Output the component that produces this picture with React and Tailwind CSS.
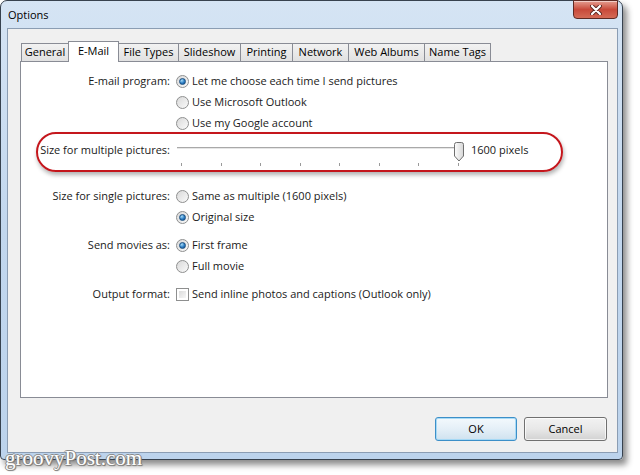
import React from 'react';

const tabs = [
  { name: 'General', w: 'w-[48px]' },
  { name: 'E-Mail', w: 'w-[51px]', active: true },
  { name: 'File Types', w: 'w-[61px]' },
  { name: 'Slideshow', w: 'w-[63px]' },
  { name: 'Printing', w: 'w-[53px]' },
  { name: 'Network', w: 'w-[57px]' },
  { name: 'Web Albums', w: 'w-[77px]' },
  { name: 'Name Tags', w: 'w-[67px]' },
];

const Radio = ({ checked }) => (
  <span className="w-[13px] h-[13px] shrink-0 rounded-full border border-[#8e8f8f] bg-gradient-to-br from-[#d9d9d9] to-[#fafafa] flex items-center justify-center">
    {checked && (
      <span className="w-[7px] h-[7px] rounded-full border border-[#1b4f80] bg-[radial-gradient(circle_at_35%_30%,#a6dcf8,#2b7cc3_55%,#0f4a86)]"></span>
    )}
  </span>
);

const Check = () => (
  <span className="w-[13px] h-[13px] shrink-0 border border-[#8e8f8f] bg-white p-[2px]">
    <span className="block w-full h-full bg-gradient-to-br from-[#dcdcdc] to-[#f7f7f7]"></span>
  </span>
);

const Row = ({ label, children }) => (
  <div className="flex items-center h-[21px]">
    <div className="w-[149px] text-right shrink-0">{label}</div>
    <div className="ml-[6px] flex items-center gap-[3px]">{children}</div>
  </div>
);

const Option = ({ checked, children }) => (
  <div className="flex items-center h-[21px] pl-[155px] gap-[3px]">
    <Radio checked={checked} />
    <span>{children}</span>
  </div>
);

const ticks = [0, 1, 2, 3, 4, 5, 6, 7];

export default function App() {
  return (
    <div className="w-[640px] h-[475px] bg-white relative overflow-hidden font-['Open_Sans','Noto_Sans',sans-serif] text-[11px] text-[#1a1a1a]">
      {/* window */}
      <div className="w-[623px] h-[460px] rounded-t-[7px] rounded-b-[4px] border border-[#37424f] bg-gradient-to-b from-[#d5e4f4] via-[#c2d7ee] to-[#bcd3ec] shadow-[4px_5px_6px_rgba(0,0,0,0.45)] flex flex-col">
        {/* title bar */}
        <div className="h-[27px] flex items-start justify-between shrink-0">
          <span className="ml-[7px] mt-[6px] text-[11px] text-black">Options</span>
          <div className="-mt-px mr-[4px] w-[45px] h-[19px] rounded-b-[4px] border border-[#5e2a24] bg-gradient-to-b from-[#e49c90] via-[#c8493a] to-[#d46a56] flex items-center justify-center shadow-[inset_0_1px_0_rgba(255,255,255,0.5)]">
            <svg width="12" height="10" viewBox="0 0 12 10">
              <path d="M2 1 L10 9 M10 1 L2 9" stroke="#5a2620" strokeWidth="4" strokeLinecap="round" />
              <path d="M2 1 L10 9 M10 1 L2 9" stroke="#ffffff" strokeWidth="2.2" strokeLinecap="round" />
            </svg>
          </div>
        </div>

        {/* client area */}
        <div className="ml-[6px] mr-[4px] mb-[6px] flex-1 border border-[#8b9db3] bg-[#f0f0f0] pl-[12px] pt-[12px] flex flex-col">
          {/* tabs */}
          <div className="flex items-end h-[20px] pl-[2px] relative z-10">
            {tabs.map((t) =>
              t.active ? (
                <div
                  key={t.name}
                  className={`${t.w} h-[21px] -mb-px -ml-px bg-white border border-b-0 border-[#898c95] flex items-start justify-center pt-[1px] text-black`}
                >
                  {t.name}
                </div>
              ) : (
                <div
                  key={t.name}
                  className={`${t.w} h-[18px] -ml-px bg-gradient-to-b from-[#f2f2f2] to-[#e1e1e1] border border-b-0 border-[#898c95] flex items-center justify-center text-black`}
                >
                  {t.name}
                </div>
              )
            )}
          </div>

          {/* panel */}
          <div className="w-[588px] h-[337px] border border-[#898c95] bg-white pt-[9px]">
            <Row label="E-mail program:">
              <Radio checked />
              <span>Let me choose each time I send pictures</span>
            </Row>
            <Option>Use Microsoft Outlook</Option>
            <Option>Use my Google account</Option>

            {/* highlighted slider row */}
            <div className="-mt-[2px] ml-[15px] w-[527px] h-[40px] rounded-[20px] border-2 border-[#c4161c] shadow-[1px_3px_4px_rgba(0,0,0,0.3)] flex items-start">
              <div className="w-[132px] shrink-0 text-right mt-[8px] leading-[16px]">Size for multiple pictures:</div>
              <div className="ml-[6px] w-[289px] h-[36px] relative">
                <div className="mt-[13px] ml-[1px] w-[284px] h-[2px] border-t border-[#a9a9a9] bg-[#e6e6e6]"></div>
                <div className="mt-[14px] flex pl-[5px] gap-[38.5px]">
                  {ticks.map((i) => (
                    <span key={i} className="w-px h-[3px] bg-[#9a9a9a]"></span>
                  ))}
                </div>
                <svg className="absolute left-[277px] top-[8px]" width="12" height="20" viewBox="0 0 12 20">
                  <defs>
                    <linearGradient id="thumb" x1="0" y1="0" x2="1" y2="0">
                      <stop offset="0" stopColor="#fdfdfd" />
                      <stop offset="1" stopColor="#d6d6d6" />
                    </linearGradient>
                  </defs>
                  <path d="M1.5 2.5 Q1.5 0.5 3.5 0.5 L8.5 0.5 Q10.5 0.5 10.5 2.5 L10.5 14 L6 19 L1.5 14 Z" fill="url(#thumb)" stroke="#6f6f6f" />
                </svg>
              </div>
              <span className="ml-[6px] mt-[8px] leading-[16px]">1600 pixels</span>
            </div>

            <div className="mt-[14px]">
              <Row label="Size for single pictures:">
                <Radio />
                <span>Same as multiple (1600 pixels)</span>
              </Row>
              <Option checked>Original size</Option>
            </div>

            <div className="mt-[7px]">
              <Row label="Send movies as:">
                <Radio checked />
                <span>First frame</span>
              </Row>
              <Option>Full movie</Option>
            </div>

            <div className="mt-[7px]">
              <Row label="Output format:">
                <Check />
                <span>Send inline photos and captions (Outlook only)</span>
              </Row>
            </div>
          </div>

          {/* buttons */}
          <div className="w-[588px] mt-[19px] flex justify-end gap-[7px] pr-[1px]">
            <button className="w-[82px] h-[24px] rounded-[3px] border border-[#3c8fc8] bg-gradient-to-b from-[#f3f9fd] via-[#e4eff7] to-[#cfe2ef] shadow-[inset_0_0_0_1px_rgba(160,215,245,0.9)] text-[11px] text-black">
              OK
            </button>
            <button className="w-[83px] h-[24px] rounded-[3px] border border-[#707070] bg-gradient-to-b from-[#f2f2f2] via-[#e8e8e8] to-[#d2d2d2] shadow-[inset_0_0_0_1px_rgba(255,255,255,0.7)] text-[11px] text-black">
              Cancel
            </button>
          </div>
        </div>
      </div>

      {/* watermark */}
      <div className="absolute left-[5px] top-[443px] font-['Liberation_Serif',serif] text-[21px] text-white [text-shadow:1px_0_0_#8a8a8a,-1px_0_0_#8a8a8a,0_1px_0_#8a8a8a,0_-1px_0_#8a8a8a,1px_1px_1px_#666]">
        groovyPost.com
      </div>
    </div>
  );
}
